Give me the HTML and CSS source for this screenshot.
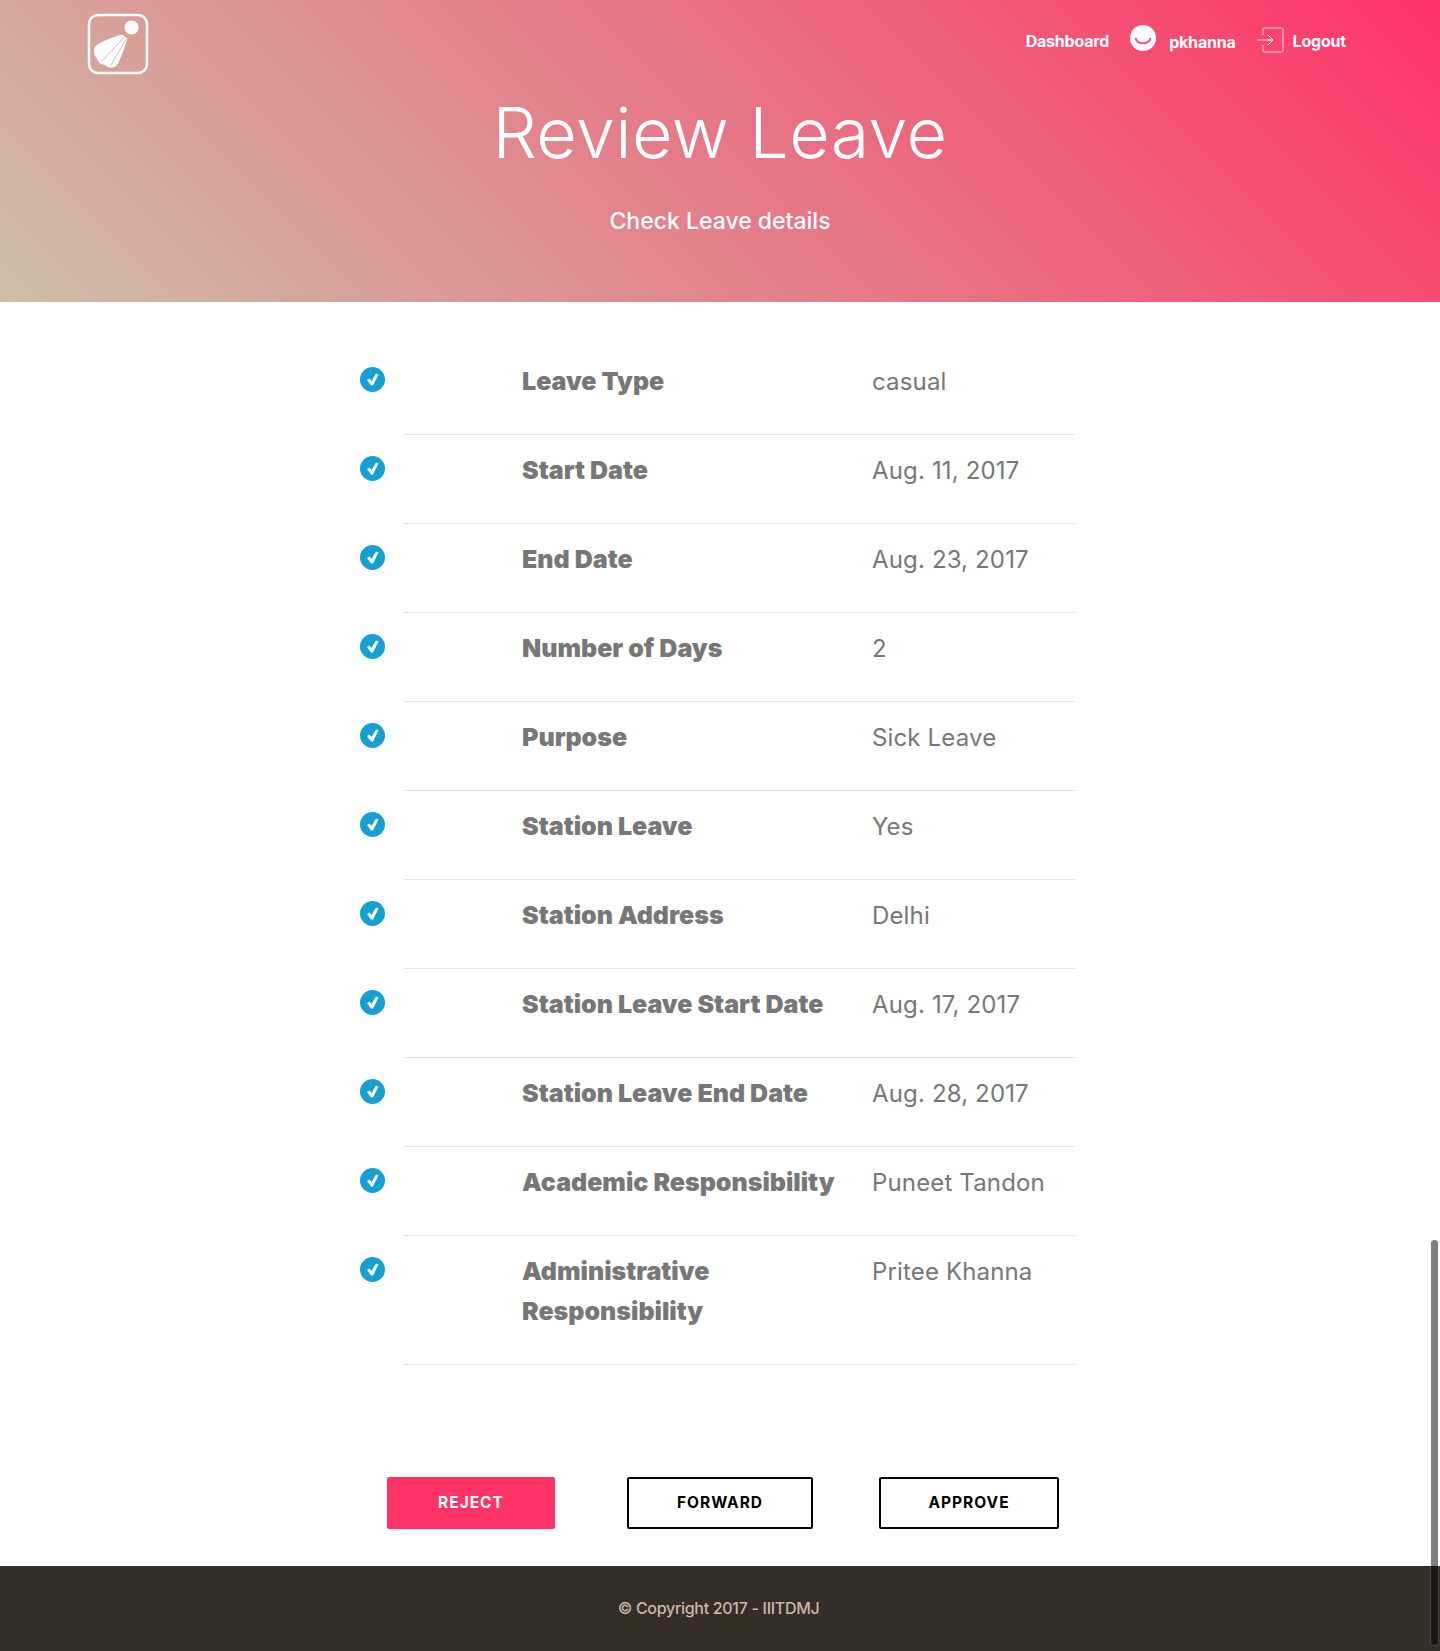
FILE: index.html
```html
<!DOCTYPE html>
<html>
<head>
	<title>Review Leave</title>
	<link rel="stylesheet" href="styles.css">
</head>
<body>
	<header class="hero">
		<nav class="nav">
			<a class="logo" href="#">
				<svg width="62" height="62" viewBox="0 0 62 62">
					<rect x="2" y="2" width="58" height="58" rx="9" fill="none" stroke="#fff" stroke-width="2.5"/>
					<circle cx="44.5" cy="14.5" r="7" fill="#fff"/>
					<path d="M35 21.5 C26 24 14 28 8 33.5 C6 37 7 42 9.5 45 C11 48 12 50 14 51 C17 51.5 19 53 21 54 C25 55.5 29 54 31.5 50 C35 42 38 33 40.5 25.5 Z" fill="#fff"/>
					<path d="M38 23.5 L14.5 48.5 M40 25 L23 53.5" fill="none" stroke="#dc9aa0" stroke-width=".7"/>
				</svg>
			</a>
			<div class="nav-links">
				<a class="nav-link" href="#">Dashboard</a>
				<svg class="smile" width="26" height="26" viewBox="0 0 26 26">
					<circle cx="13" cy="13" r="13" fill="#fff"/>
					<path d="M5.5 13 C7 20 19 20 20.5 13" fill="none" stroke="#f2597c" stroke-width="2"/>
				</svg>
				<a class="user" href="#">pkhanna</a>
				<svg class="logout-icon" width="27" height="26" viewBox="0 0 27 26">
					<path d="M6 8 V2 Q6 1 7 1 H25 Q26 1 26 2 V24 Q26 25 25 25 H7 Q6 25 6 24 V18" fill="none" stroke="#fff" stroke-opacity=".75" stroke-width="1"/>
					<path d="M0 13 H16 M11 8 L16 13 L11 18" fill="none" stroke="#fff" stroke-width="1"/>
				</svg>
				<a class="nav-link" href="#">Logout</a>
			</div>
		</nav>
		<h1 class="title">Review Leave</h1>
		<p class="subtitle">Check Leave details</p>
	</header>

	<main class="details">
		<ul class="list">
			<li class="item"><span class="tick"></span><div class="row"><span class="label">Leave Type</span><span class="value">casual</span></div></li>
			<li class="item"><span class="tick"></span><div class="row"><span class="label">Start Date</span><span class="value">Aug. 11, 2017</span></div></li>
			<li class="item"><span class="tick"></span><div class="row"><span class="label">End Date</span><span class="value">Aug. 23, 2017</span></div></li>
			<li class="item"><span class="tick"></span><div class="row"><span class="label">Number of Days</span><span class="value">2</span></div></li>
			<li class="item"><span class="tick"></span><div class="row"><span class="label">Purpose</span><span class="value">Sick Leave</span></div></li>
			<li class="item"><span class="tick"></span><div class="row"><span class="label">Station Leave</span><span class="value">Yes</span></div></li>
			<li class="item"><span class="tick"></span><div class="row"><span class="label">Station Address</span><span class="value">Delhi</span></div></li>
			<li class="item"><span class="tick"></span><div class="row"><span class="label">Station Leave Start Date</span><span class="value">Aug. 17, 2017</span></div></li>
			<li class="item"><span class="tick"></span><div class="row"><span class="label">Station Leave End Date</span><span class="value">Aug. 28, 2017</span></div></li>
			<li class="item"><span class="tick"></span><div class="row"><span class="label">Academic Responsibility</span><span class="value">Puneet Tandon</span></div></li>
			<li class="item"><span class="tick"></span><div class="row"><span class="label">Administrative<br>Responsibility</span><span class="value">Pritee Khanna</span></div></li>
		</ul>

		<div class="actions">
			<a class="btn btn-reject" href="#">Reject</a>
			<a class="btn" href="#">Forward</a>
			<a class="btn" href="#">Approve</a>
		</div>
	</main>

	<footer class="footer">© Copyright 2017 - IIITDMJ</footer>

	<div class="scrollbar"></div>
</body>
</html>
```

FILE: styles.css
```css
* {
	box-sizing: border-box;
}

html,
body {
	margin: 0;
	padding: 0;
}

body {
	position: relative;
	height: 1651px;
	overflow: hidden;
	background: #fff;
	font-family: Inter, "Noto Sans", sans-serif;
	color: #777;
}

a {
	color: inherit;
	text-decoration: none;
}

.hero {
	height: 302px;
	background: linear-gradient(45deg, #ccbfa8 0%, #ff3366 100%);
	color: #fff;
	text-align: center;
}

.nav {
	display: flex;
	justify-content: space-between;
	padding: 13px 94px 0 87px;
	height: 75px;
}

.logo {
	display: block;
	height: 62px;
}

.nav-links {
	display: flex;
	align-items: flex-start;
	padding-top: 12px;
	font-size: 16px;
	font-weight: 700;
	line-height: 24px;
	letter-spacing: -0.2px;
}

.nav-link {
	margin-top: 4px;
}

.smile {
	margin: 0 0 0 21px;
}

.user {
	margin: 5px 0 0 13px;
}

.logout-icon {
	margin: 2px 9px 0 21px;
}

.title {
	margin: 16px 0 0;
	font-size: 70px;
	font-weight: 300;
	line-height: 84px;
	letter-spacing: 0.4px;
}

.subtitle {
	margin: 31px 0 0;
	font-size: 23px;
	font-weight: 500;
	line-height: 30px;
	letter-spacing: 0;
}

.details {
	padding: 44px 0 0;
}

.list {
	width: 715px;
	margin: 0 0 0 360px;
	padding: 0;
	list-style: none;
}

.item {
	display: flex;
	align-items: flex-start;
	gap: 19px;
}

.tick {
	flex: none;
	width: 25px;
	height: 25px;
	margin-top: 21px;
	border-radius: 50%;
	background: #169fd1;
	position: relative;
}

.tick::after {
	content: "";
	position: absolute;
	inset: 0;
	background: #fff;
	clip-path: polygon(28% 52%, 38% 46%, 46% 56%, 64% 26%, 74% 30%, 52% 74%, 44% 74%);
}

.row {
	flex: 1;
	display: flex;
	padding: 16px 0 32px 118px;
	border-bottom: 1px solid #e4e4e4;
	font-size: 24px;
	line-height: 40px;
}

.label {
	flex: none;
	width: 350px;
	margin-top: -1px;
	margin-bottom: 1px;
	font-size: 25px;
	font-weight: 900;
}

.value {
	letter-spacing: 0.15px;
}

.actions {
	display: grid;
	grid-template-columns: repeat(3, 249px);
	justify-content: center;
	justify-items: center;
	margin-top: 112px;
}

.btn {
	height: 52px;
	padding: 0 47.5px;
	border: 2px solid #000;
	border-radius: 2px;
	color: #000;
	font-size: 15.5px;
	font-weight: 700;
	line-height: 47px;
	letter-spacing: 1px;
	text-transform: uppercase;
}

.btn-reject {
	padding: 0 49px;
	background: #ff3366;
	border-color: #ff3366;
	color: #fff;
}

.footer {
	height: 85px;
	margin-top: 37px;
	background: #342e29;
	color: #cdb9a6;
	font-size: 16px;
	font-weight: 500;
	line-height: 85px;
	text-align: center;
	letter-spacing: -0.3px;
	padding-right: 3px;
}

.scrollbar {
	position: absolute;
	top: 1240px;
	left: 1431px;
	width: 7px;
	height: 405px;
	border-radius: 4px;
	background: rgba(0, 0, 0, 0.5);
	box-shadow: 0 0 0 1px rgba(255, 255, 255, 0.1);
}
```
